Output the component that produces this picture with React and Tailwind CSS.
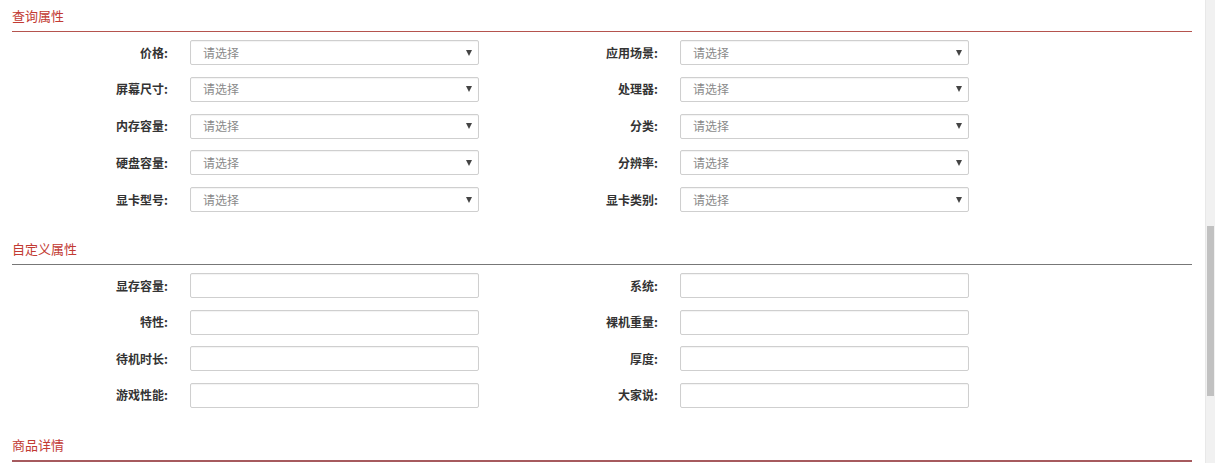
import React from "react";

const font = { fontFamily: '"Microsoft YaHei", "Noto Sans CJK SC", "Noto Sans", sans-serif' };

function Header({ title, line }) {
  return (
    <div className={`h-[32px] flex items-center ${line}`}>
      <span className="text-[13px] text-[#c23a33] leading-none">{title}</span>
    </div>
  );
}

function Select() {
  return (
    <div className="relative w-[289px] h-[25px] border border-[#cfcfcf] rounded-[2px] bg-white flex items-center pl-[12px] shadow-[inset_0_1px_1px_rgba(0,0,0,0.05)]">
      <span className="text-[12px] text-[#8a8a8a]">请选择</span>
      <span className="ml-auto mr-[6px] w-0 h-0 border-l-[3.5px] border-r-[3.5px] border-t-[6px] border-l-transparent border-r-transparent border-t-[#444]" />
    </div>
  );
}

function Input() {
  return (
    <div className="w-[289px] h-[25px] border border-[#cfcfcf] rounded-[2px] bg-white shadow-[inset_0_1px_1px_rgba(0,0,0,0.05)]" />
  );
}

function Row({ a, b, Field }) {
  return (
    <div className="flex items-center h-[25px]">
      <div className="w-[156px] text-right text-[12px] font-bold text-[#333]">{a}:</div>
      <div className="ml-[22px]"><Field /></div>
      <div className="w-[179px] text-right text-[12px] font-bold text-[#333]">{b}:</div>
      <div className="ml-[22px]"><Field /></div>
    </div>
  );
}

export default function App() {
  const q = [
    ["价格", "应用场景"],
    ["屏幕尺寸", "处理器"],
    ["内存容量", "分类"],
    ["硬盘容量", "分辨率"],
    ["显卡型号", "显卡类别"],
  ];
  const c = [
    ["显存容量", "系统"],
    ["特性", "裸机重量"],
    ["待机时长", "厚度"],
    ["游戏性能", "大家说"],
  ];
  return (
    <div className="w-[1215px] h-[463px] overflow-hidden flex bg-white" style={font}>
      <div className="w-[1205px] pl-[12px] pr-[13px]">
        <Header title="查询属性" line="border-b border-[#b5544e]" />
        <div className="pt-[8px] flex flex-col gap-[11.75px]">
          {q.map(([a, b]) => <Row key={a} a={a} b={b} Field={Select} />)}
        </div>
        <div className="mt-[21px]">
          <Header title="自定义属性" line="border-b border-[#777]" />
        </div>
        <div className="pt-[8px] flex flex-col gap-[11.67px]">
          {c.map(([a, b]) => <Row key={a} a={a} b={b} Field={Input} />)}
        </div>
        <div className="mt-[22px]">
          <Header title="商品详情" line="border-b-2 border-[#a65a5e]" />
        </div>
      </div>
      <div className="w-[10px] h-full bg-[#f1f1f1] border-l border-[#e8e8e8] flex flex-col">
        <div className="h-[226px]" />
        <div className="h-[170px] mx-[1px] bg-[#c1c1c1]" />
      </div>
    </div>
  );
}
